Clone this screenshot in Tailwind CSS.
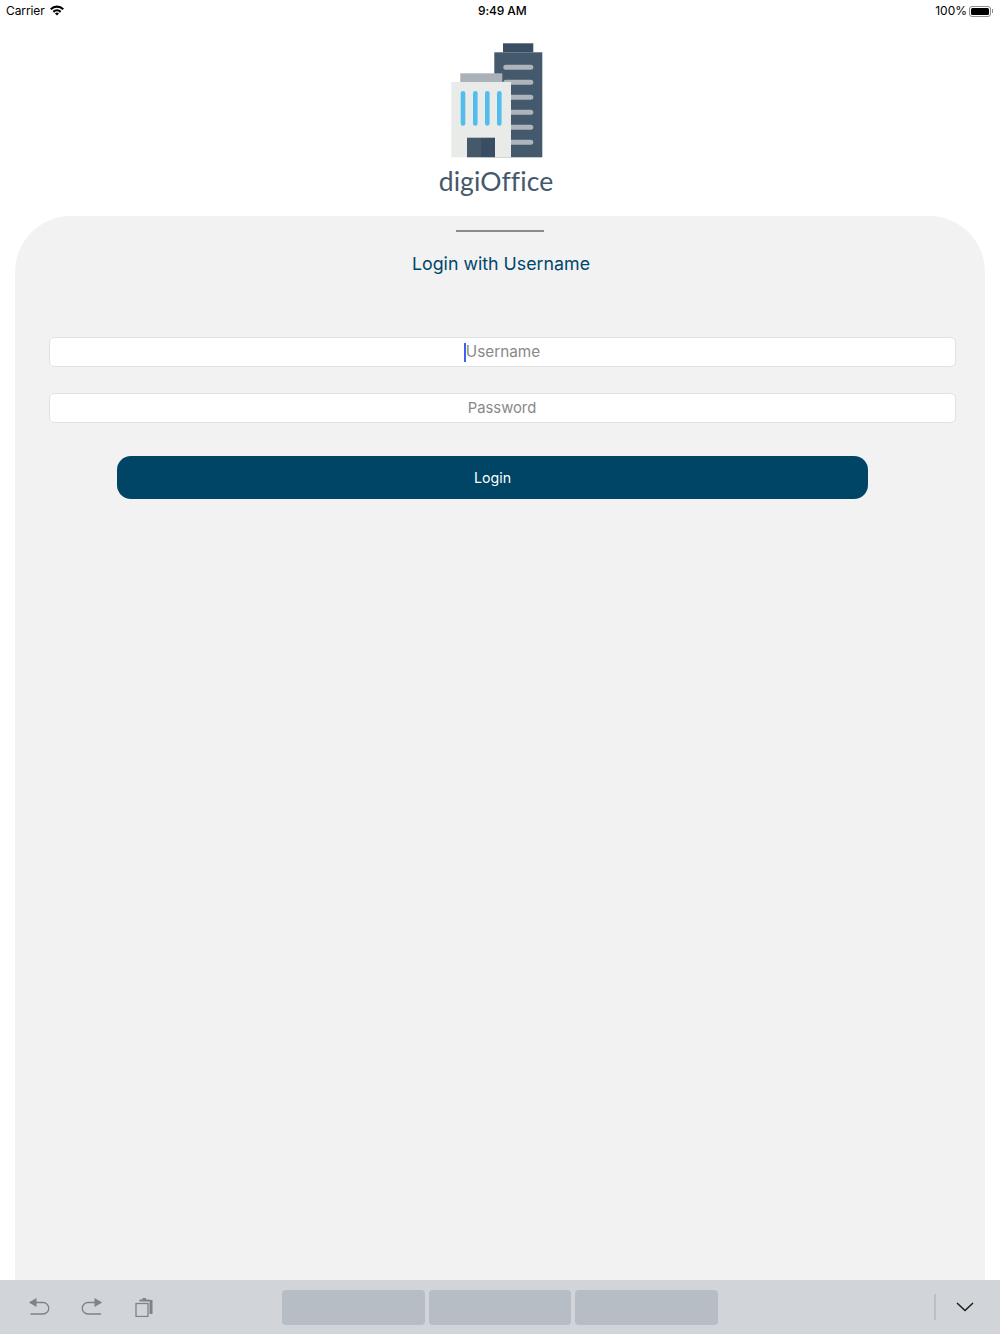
<!DOCTYPE html>
<html lang="en">
<head>
  <meta charset="UTF-8" />
  <title>digiOffice Login</title>
  <meta name="viewport" content="width=device-width, initial-scale=1.0" />
  <script src="https://cdn.jsdelivr.net/npm/@tailwindcss/browser@4"></script>
</head>
<body class="bg-white font-['Inter',sans-serif] text-black">
  <div class="flex h-[1334px] w-[1000px] flex-col overflow-hidden">

    <!-- status bar -->
    <div class="relative flex h-[20px] items-center justify-between pt-[2px] pl-[6px] pr-[7px] text-[12px]">
      <div class="flex items-center gap-[5px]">
        <span class="tracking-[-0.1px]">Carrier</span>
        <svg width="14" height="11" viewBox="0 0 14 11" class="mb-[2px]">
          <path d="M0 3.4a10 10 0 0 1 14 0l-1.500 1.600a7.800 7.800 0 0 0-11 0z" fill="#000" />
          <path d="M2.600 6.100a6.300 6.300 0 0 1 8.800 0L9.900 7.700a4.100 4.100 0 0 0-5.800 0z" fill="#000" />
          <path d="M5 8.400a2.800 2.800 0 0 1 4 0L7 10.600z" fill="#000" />
        </svg>
      </div>
      <span class="absolute left-[478px] tracking-[-0.1px] font-medium">9:49 AM</span>
      <div class="flex items-center gap-[2px]">
        <span>100%</span>
        <div class="flex items-center">
          <div class="h-[11px] w-[22px] rounded-[3px] border border-[#8e8e8e] p-[1px]">
            <div class="h-full w-full rounded-[1.5px] bg-black"></div>
          </div>
          <div class="ml-[1px] h-[4px] w-[1px] bg-[#8e8e8e]"></div>
        </div>
      </div>
    </div>

    <!-- logo -->
    <div class="flex h-[196px] flex-col items-center">
      <svg width="112" height="116" viewBox="440 42 112 116" class="mt-[22px] ml-[-9px]">
        <rect x="503" y="43.3" width="30.3" height="9" fill="#3a4e63" />
        <rect x="494.3" y="52.3" width="48" height="105" fill="#44596c" />
        <g fill="#aeb4bb">
          <rect x="503.3" y="64.7" width="30" height="5" rx="2.5" />
          <rect x="503.3" y="79.7" width="30" height="5" rx="2.5" />
          <rect x="503.3" y="94.7" width="30" height="5" rx="2.5" />
          <rect x="503.3" y="109.7" width="30" height="5" rx="2.5" />
          <rect x="503.3" y="124.7" width="30" height="5" rx="2.5" />
          <rect x="503.3" y="139.7" width="30" height="5" rx="2.5" />
        </g>
        <rect x="460.3" y="73.3" width="42" height="8.7" fill="#aab1b9" />
        <rect x="451.3" y="82" width="59.7" height="75.3" fill="#e9ebe9" />
        <g fill="#52bdec">
          <rect x="460.7" y="91" width="4.6" height="34.7" rx="2.3" />
          <rect x="473" y="91" width="4.6" height="34.7" rx="2.3" />
          <rect x="485" y="91" width="4.6" height="34.7" rx="2.3" />
          <rect x="497" y="91" width="4.6" height="34.7" rx="2.3" />
        </g>
        <rect x="467" y="137.7" width="14" height="19.6" fill="#46596b" />
        <rect x="481" y="137.7" width="14" height="19.6" fill="#3a4e63" />
      </svg>
      <span class="mt-[3px] ml-[-8px] font-['Lato',sans-serif] text-[26.500px] leading-[40px] tracking-[0.1px] text-[#44596c]">digiOffice</span>
    </div>

    <!-- login card -->
    <div class="mx-[15px] flex flex-1 flex-col items-center rounded-t-[56px] bg-[#f2f2f2]">
      <div class="mt-[14px] h-[2px] w-[88px] bg-[#8a8a8a]"></div>
      <h1 class="mt-[19px] ml-[2px] text-[17.800px] leading-[26px] text-[#00466a]">Login with Username</h1>

      <div class="mt-[60px] ml-[4px] flex h-[30px] w-[907px] items-center justify-center rounded-[5px] border border-[#e2e2e2] bg-white text-[15.300px] text-[#88888a]">
        <span class="h-[19px] w-[2px] bg-[#3e62e8]"></span>
        <span>Username</span>
      </div>
      <div class="mt-[26px] ml-[4px] flex h-[30px] w-[907px] items-center justify-center rounded-[5px] border border-[#e2e2e2] bg-white pt-[1px] text-[14.800px] text-[#88888a]">
        <span>Password</span>
      </div>

      <button class="mt-[33px] ml-[-15px] h-[43px] w-[751px] rounded-[14px] bg-[#004565] text-[14.200px] text-white">Login</button>
    </div>

    <!-- keyboard shortcut bar -->
    <div class="relative flex h-[54px] items-center bg-[#d1d4d9]">
      <div class="flex w-[282px] items-center">
        <svg width="24" height="22" viewBox="0 0 24 22" class="mb-[2px] ml-[27px]" fill="none">
          <path d="M3 7.5h13a5.5 5.5 0 0 1 0 11.500H3.500" stroke="#7f8286" stroke-width="1.3" />
          <path d="M2 7.500l7.500-4.500v9z" fill="#7f8286" />
        </svg>
        <svg width="24" height="22" viewBox="0 0 24 22" class="mb-[2px] ml-[29px]" fill="none">
          <path d="M21 7.500H8a5.500 5.500 0 0 0 0 11.500H21" stroke="#7f8286" stroke-width="1.3" />
          <path d="M22 7.500l-7.500-4.500v9z" fill="#7f8286" />
        </svg>
        <svg width="20" height="20" viewBox="0 0 20 20" class="mb-[1px] ml-[30px]" fill="none">
          <path d="M5.500 4.500V2.500h3V1h3.500v1.500h3.500V3h3v14h-3V4.500z" fill="#7f8286" />
          <rect x="2" y="6.500" width="12" height="13" stroke="#7f8286" stroke-width="1.300" fill="#d1d4d9" />
        </svg>
      </div>
      <div class="flex gap-[4px]">
        <div class="h-[35px] w-[143px] rounded-[4px] bg-[#b7bdc5]"></div>
        <div class="h-[35px] w-[142px] rounded-[4px] bg-[#b7bdc5]"></div>
        <div class="h-[35px] w-[143px] rounded-[4px] bg-[#b7bdc5]"></div>
      </div>
      <div class="ml-[216px] h-[26px] w-[2px] bg-[#bcc0c6]"></div>
      <svg width="20" height="12" viewBox="0 0 20 12" class="ml-[19px]" fill="none">
        <path d="M2 2l8 7.500 8-7.500" stroke="#1c1c1e" stroke-width="1.500" />
      </svg>
    </div>
  </div>
</body>
</html>
